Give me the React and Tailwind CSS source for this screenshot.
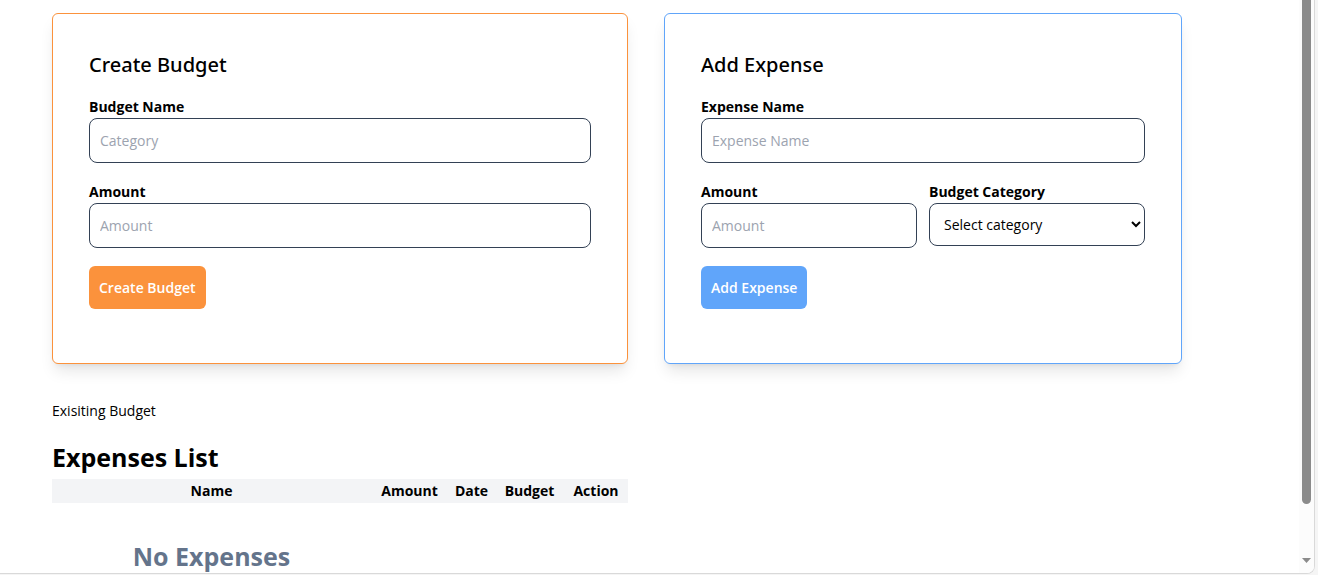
const fieldClass =
  'block h-[45px] w-full rounded-lg border border-[#334155] bg-white px-[10px] text-[14px] text-black placeholder:text-[#9ca3af]';

function Field({ id, label, children }) {
  return (
    <div className="mb-[18px] min-w-0">
      <label htmlFor={id} className="block text-[14px] leading-[22px] font-bold">
        {label}
      </label>
      {children}
    </div>
  );
}

function TextField({ id, label, placeholder }) {
  return (
    <Field id={id} label={label}>
      <input id={id} type="text" placeholder={placeholder} className={fieldClass} />
    </Field>
  );
}

function BudgetForm() {
  return (
    <form className="rounded-md border border-[#fb923c] bg-white px-9 pt-9 pb-[54px] shadow-lg">
      <h2 className="mb-4 font-['Noto_Sans','Open_Sans',sans-serif] text-[20px] leading-[30px] font-medium">
        Create Budget
      </h2>
      <TextField id="budget-name" label="Budget Name" placeholder="Category" />
      <TextField id="budget-amount" label="Amount" placeholder="Amount" />
      <button
        type="button"
        className="h-[43px] rounded-md bg-[#fb923c] px-[10px] text-[14px] font-semibold whitespace-nowrap text-white"
      >
        Create Budget
      </button>
    </form>
  );
}

function ExpenseForm() {
  return (
    <form className="rounded-md border border-[#60a5fa] bg-white px-9 pt-9 pb-[54px] shadow-lg">
      <h2 className="mb-4 font-['Noto_Sans','Open_Sans',sans-serif] text-[20px] leading-[30px] font-medium">
        Add Expense
      </h2>
      <TextField id="expense-name" label="Expense Name" placeholder="Expense Name" />
      <div className="grid grid-cols-2 gap-3">
        <TextField id="expense-amount" label="Amount" placeholder="Amount" />
        <Field id="expense-category" label="Budget Category">
          <select
            id="expense-category"
            className="block h-[43px] w-full rounded-lg border border-[#334155] bg-white px-[10px] text-[14px] text-black"
          >
            <option>Select category</option>
          </select>
        </Field>
      </div>
      <button
        type="button"
        className="h-[43px] rounded-md bg-[#60a5fa] px-[10px] text-[14px] font-semibold whitespace-nowrap text-white"
      >
        Add Expense
      </button>
    </form>
  );
}

function ExpensesTable() {
  return (
    <table className="w-full max-w-[576px] table-fixed border-collapse text-[14px]">
      <colgroup>
        <col />
        <col className="w-[77px]" />
        <col className="w-[47px]" />
        <col className="w-[69px]" />
        <col className="w-[64px]" />
      </colgroup>
      <thead>
        <tr className="h-6 bg-[#f3f4f6] leading-6">
          <th>Name</th>
          <th>Amount</th>
          <th>Date</th>
          <th>Budget</th>
          <th>Action</th>
        </tr>
      </thead>
      <tbody>
        <tr>
          <td className="pt-9 text-center text-[25px] leading-[34px] font-bold text-[#64748b]">
            No Expenses
          </td>
        </tr>
      </tbody>
    </table>
  );
}

function ScrollTrack() {
  return (
    <div className="flex w-[15px] shrink-0 flex-col items-center bg-[#fcfcfc]" aria-hidden="true">
      <div className="h-[88%] w-[9px] rounded-b-full bg-[#8b8b8b]" />
      <svg className="mt-auto mb-[10px] h-[5px] w-[9px]" viewBox="0 0 9 5">
        <path d="M0 0h9L4.5 5z" fill="#8b8b8b" />
      </svg>
    </div>
  );
}

export default function App() {
  return (
    <div className="h-screen overflow-hidden bg-[#f5f5f5] pr-[3px] pb-px font-['Open_Sans','Noto_Sans',sans-serif] text-black">
      <div className="flex h-full overflow-hidden rounded-br-lg border-r border-b border-[#d9d9d9] bg-white">
        <main className="min-w-0 flex-1 overflow-hidden pt-[13px] pr-4 pl-[52px]">
          <div className="grid max-w-[1130px] grid-cols-[576fr_518fr] gap-9">
            <BudgetForm />
            <ExpenseForm />
          </div>
          <p className="mt-9 text-[14px] leading-[22px]">Exisiting Budget</p>
          <h1 className="mt-[18px] mb-[5px] text-[25px] leading-[34px] font-bold">Expenses List</h1>
          <ExpensesTable />
        </main>
        <ScrollTrack />
      </div>
    </div>
  );
}
